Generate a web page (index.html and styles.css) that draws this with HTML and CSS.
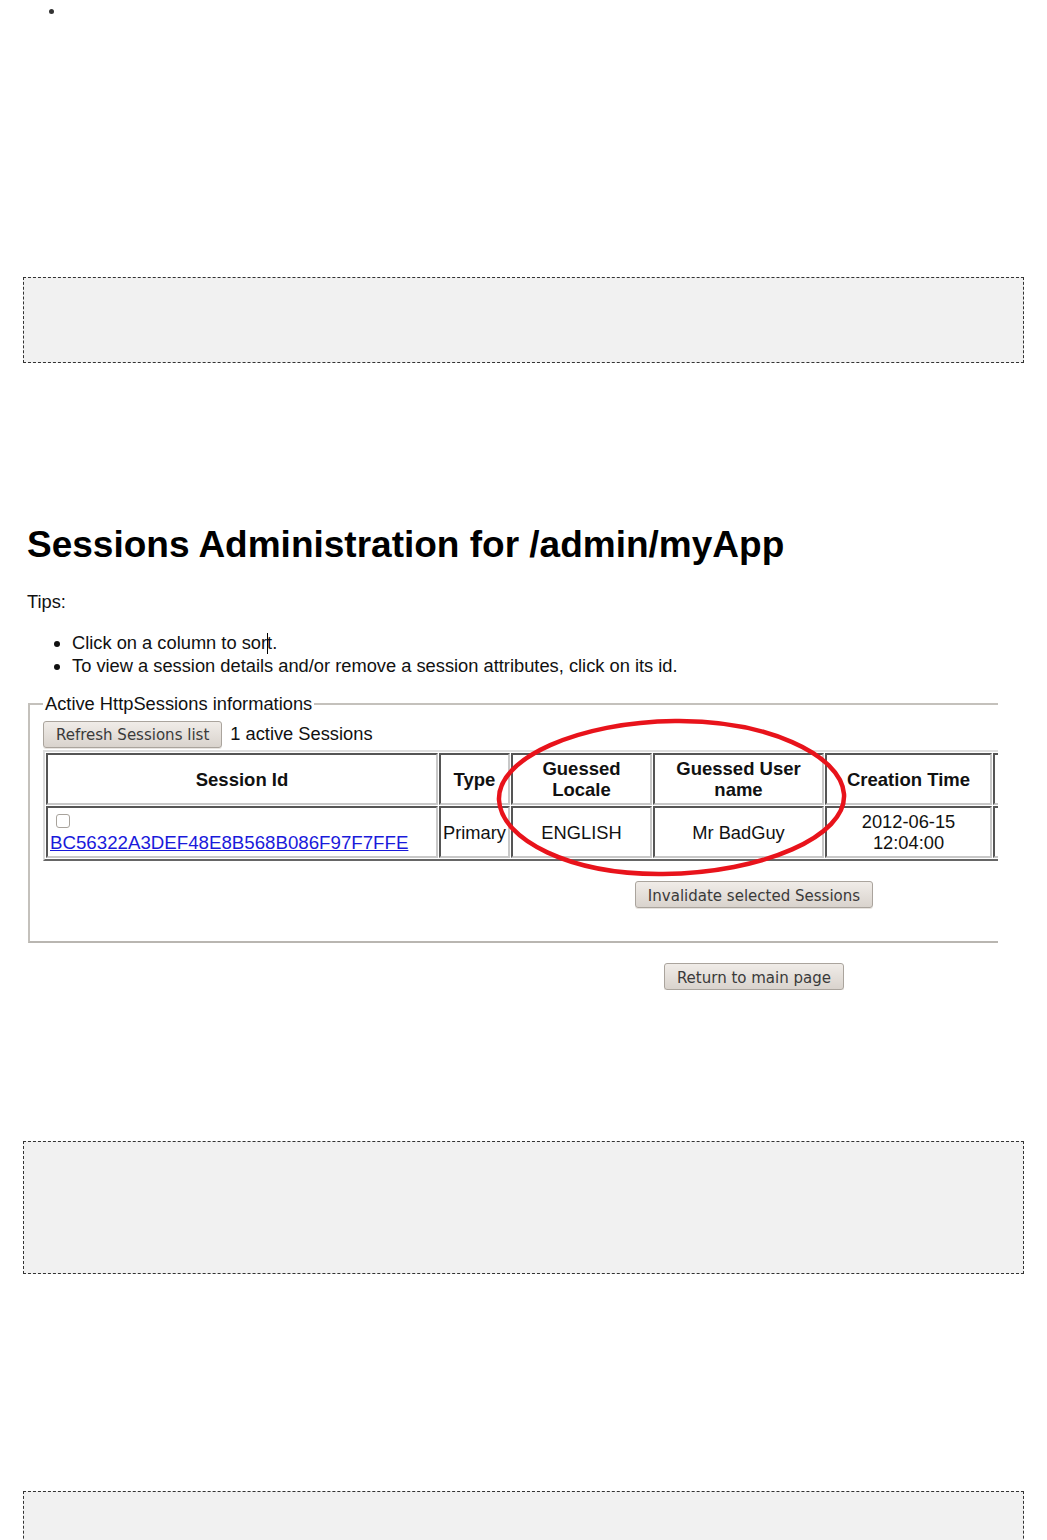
FILE: index.html
```html
<!doctype html>
<html lang="en">
<head>
    <meta charset="UTF-8">
    <title>Sessions Administration</title>
    <link rel="stylesheet" href="styles.css">
</head>
<body>
    <ul class="top-list">
        <li>&nbsp;</li>
    </ul>

    <div class="code-block block-short"></div>

    <div class="shot">
        <div class="shot-inner">
            <h1>Sessions Administration for /admin/myApp</h1>
            <p class="tips">Tips:</p>
            <ul class="tips-list">
                <li>Click on a column to sor<span class="caret"></span>t.</li>
                <li>To view a session details and/or remove a session attributes, click on its id.</li>
            </ul>

            <fieldset class="sessions">
                <legend>Active HttpSessions informations</legend>
                <div class="toolbar">
                    <button class="btn">Refresh Sessions list</button>
                    <span class="count">1 active Sessions</span>
                </div>

                <div class="table-wrap">
                    <table class="sessions-table">
                        <thead>
                            <tr>
                                <th class="c-id">Session Id</th>
                                <th class="c-type">Type</th>
                                <th class="c-locale">Guessed<br>Locale</th>
                                <th class="c-user">Guessed User<br>name</th>
                                <th class="c-created">Creation Time</th>
                                <th class="c-rest"></th>
                            </tr>
                        </thead>
                        <tbody>
                            <tr>
                                <td class="c-id left">
                                    <input type="checkbox" class="check"><br>
                                    <a href="#">BC56322A3DEF48E8B568B086F97F7FFE</a>
                                </td>
                                <td class="left">Primary</td>
                                <td>ENGLISH</td>
                                <td>Mr BadGuy</td>
                                <td>2012-06-15<br>12:04:00</td>
                                <td></td>
                            </tr>
                        </tbody>
                    </table>
                    <svg class="circle" width="355" height="160" viewBox="0 0 355 160">
                        <path d="M180 3 C 270 2, 346 36, 349 76 C 352 118, 268 155, 168 156 C 76 157, 6 122, 4 82 C 2 40, 84 4, 180 3 Z"
                              fill="none" stroke="#e8131b" stroke-width="4.5"/>
                    </svg>
                </div>

                <div class="actions">
                    <button class="btn">Invalidate selected Sessions</button>
                </div>
            </fieldset>

            <div class="return-row">
                <button class="btn">Return to main page</button>
            </div>
        </div>
    </div>

    <div class="code-block block-tall"></div>

    <div class="code-block block-end"></div>
</body>
</html>
```

FILE: styles.css
```css
body {
    margin: 0;
    background: #fff;
    font-family: "Liberation Sans", Arial, sans-serif;
    color: #111;
}
.top-list {
    margin: 0;
    padding: 0 0 0 65px;
    font-size: 16px;
    line-height: 22px;
    color: #333;
}
.code-block {
    margin: 0 23px;
    background: #f1f1f1;
    border: 1px dashed #333;
}
.block-short {
    margin-top: 255px;
    height: 84px;
}
.block-tall {
    margin-top: 151px;
    height: 131px;
}
.block-end {
    margin-top: 217px;
    height: 120px;
}

/* embedded screenshot, cropped on the right */
.shot {
    width: 998px;
    overflow: hidden;
}
.shot-inner {
    width: 1480px;
    padding-left: 27px;
    padding-top: 160px;
}
h1 {
    margin: 0;
    font-size: 37px;
    line-height: 44px;
    font-weight: bold;
    color: #000;
}
.tips {
    margin: 24px 0 0;
    font-size: 18.3px;
    line-height: 22px;
}
.tips-list {
    margin: 18px 0 0;
    padding-left: 45px;
    font-size: 18.3px;
    line-height: 23px;
}
.caret {
    display: inline-block;
    width: 1px;
    height: 21px;
    background: #000;
    vertical-align: -5px;
    margin-right: -1px;
}
.sessions {
    margin: 16px 0 0 1px;
    width: 1452px;
    box-sizing: border-box;
    padding: 6px 13px 33px 13px;
    border: 2px solid #c4c1bc;
    border-bottom-color: #b9b6b1;
}
.sessions legend {
    font-size: 18.3px;
    line-height: 22px;
    padding: 0 2px;
}
.toolbar {
    display: flex;
    align-items: center;
    gap: 8px;
    height: 26px;
}
.count {
    font-size: 18.3px;
}
.btn {
    font-family: "DejaVu Sans Condensed", "Liberation Sans Narrow", sans-serif;
    font-stretch: condensed;
    font-size: 16.7px;
    color: #3a3a3a;
    background: linear-gradient(#f0ece8, #d9d3cd);
    border: 1px solid #aaa49d;
    border-radius: 3px;
    height: 27px;
    padding: 0 12px;
    box-shadow: 0 1px 0 #e8e4e0;
}
.table-wrap {
    position: relative;
    margin-top: 3px;
}
.sessions-table {
    table-layout: fixed;
    width: 1153px;
    border-spacing: 1px;
    border: 2px solid;
    border-color: #ddd #666 #666 #ddd;
    font-size: 18.3px;
}
.sessions-table th,
.sessions-table td {
    box-sizing: border-box;
    height: 52px;
    padding: 1px 2px;
    border: 2px solid;
    border-color: #555 #c8c8c8 #c8c8c8 #555;
    text-align: center;
    vertical-align: middle;
    line-height: 21px;
}
.sessions-table th {
    font-size: 18.5px;
    font-weight: bold;
}
.sessions-table td.left {
    text-align: left;
    white-space: nowrap;
}
.c-id { width: 392px; }
.c-type { width: 71px; }
.c-locale { width: 141px; }
.c-user { width: 171px; }
.c-created { width: 167px; }
.c-rest { width: 200px; }
.sessions-table a {
    color: #1a1adb;
    font-size: 18.7px;
}
.check {
    appearance: none;
    width: 14px;
    height: 14px;
    margin: 0 0 0 6px;
    border: 1px solid #a8a39c;
    border-radius: 3px;
    background: #fff;
    vertical-align: 0;
}
.circle {
    position: absolute;
    left: 452px;
    top: -32px;
}
.actions {
    margin-top: 20px;
    text-align: center;
}
.return-row {
    margin: 20px 0 0 1px;
    width: 1452px;
    text-align: center;
}
```
